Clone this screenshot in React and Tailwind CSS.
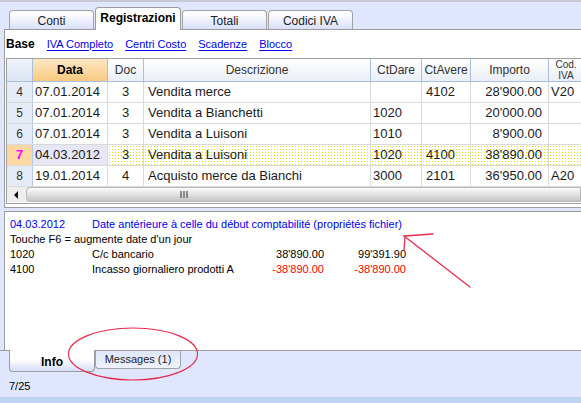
import React from "react"

const rows = [
  { n: "4", date: "07.01.2014", doc: "3", desc: "Vendita merce", dare: "", avere: "4102", imp: "28'900.00", iva: "V20" },
  { n: "5", date: "07.01.2014", doc: "3", desc: "Vendita a Bianchetti", dare: "1020", avere: "", imp: "20'000.00", iva: "" },
  { n: "6", date: "07.01.2014", doc: "3", desc: "Vendita a Luisoni", dare: "1010", avere: "", imp: "8'900.00", iva: "" },
  { n: "7", date: "04.03.2012", doc: "3", desc: "Vendita a Luisoni", dare: "1020", avere: "4100", imp: "38'890.00", iva: "", current: true },
  { n: "8", date: "19.01.2014", doc: "4", desc: "Acquisto merce da Bianchi", dare: "3000", avere: "2101", imp: "36'950.00", iva: "A20" },
]

const topTabs = [
  { label: "Conti" },
  { label: "Registrazioni", active: true },
  { label: "Totali" },
  { label: "Codici IVA" },
]

const links = ["IVA Completo", "Centri Costo", "Scadenze", "Blocco"]

const dots = "bg-[radial-gradient(circle,#e2e200_0.8px,transparent_1px)] bg-[length:3px_3px]"

const GridRow = ({ r }) => {
  const cell = r.current ? `bg-white ${dots}` : "bg-white"
  return (
    <div className="flex h-[21px] border-b border-[#d9d9d9] text-[13px] text-[#1a1a1a] leading-[20px]">
      <div
        className={`w-[26px] shrink-0 border-r border-[#b9cbe3] text-center text-[12px] ${
          r.current ? "bg-[#fbd89f] text-[#ff00ff] font-bold text-[13px]" : "bg-[#e5ecf7] text-[#333]"
        }`}
      >
        {r.n}
      </div>
      <div className={`w-[75px] shrink-0 border-r border-[#d9d9d9] pl-[2px] ${r.current ? "bg-[#e6e6f4]" : "bg-white"}`}>{r.date}</div>
      <div className={`w-[36px] shrink-0 border-r border-[#d9d9d9] text-center ${cell}`}>{r.doc}</div>
      <div className={`w-[227px] shrink-0 border-r border-[#d9d9d9] pl-[4px] ${cell}`}>{r.desc}</div>
      <div className={`w-[51px] shrink-0 border-r border-[#d9d9d9] pl-[2px] ${cell}`}>{r.dare}</div>
      <div className={`w-[49px] shrink-0 border-r border-[#d9d9d9] pl-[4px] ${cell}`}>{r.avere}</div>
      <div className={`w-[78px] shrink-0 border-r border-[#d9d9d9] pr-[6px] text-right ${cell}`}>{r.imp}</div>
      <div className={`w-[34px] shrink-0 pl-[2px] ${cell}`}>{r.iva}</div>
    </div>
  )
}

export default function App() {
  return (
    <div className="relative w-[581px] h-[403px] overflow-hidden bg-[#dfe6fd] font-['Liberation_Sans',Arial,sans-serif] text-black">
      <div className="h-[2px] bg-[#c6c9d2]" />

      {/* top tabs */}
      <div className="ml-[4px] h-[28px] flex items-end gap-[1px] pl-[5px] border-b border-[#9c9c9c]">
        {topTabs.map((t) =>
          t.active ? (
            <div
              key={t.label}
              className="relative -mb-px w-[86px] h-[23px] flex items-center justify-center rounded-t-[4px] border border-b-0 border-[#9c9c9c] bg-white text-[12px] font-bold pb-[2px]"
            >
              {t.label}
            </div>
          ) : (
            <div
              key={t.label}
              className="w-[85px] h-[19px] flex items-center justify-center rounded-t-[4px] border border-b-0 border-[#a3a3a3] bg-gradient-to-b from-white from-10% to-[#d9e0fa] text-[12px] text-[#222] pt-[1px]"
            >
              {t.label}
            </div>
          )
        )}
      </div>

      {/* upper panel */}
      <div className="ml-[4px] h-[178px] border-l border-b border-[#9c9c9c] bg-white flex flex-col">
        <div className="h-[28px] flex items-center gap-3 pl-[1px] text-[11px]">
          <span className="font-bold text-[12px]">Base</span>
          {links.map((l) => (
            <span key={l} className="text-[#0000ee] underline underline-offset-2">
              {l}
            </span>
          ))}
        </div>

        <div className="ml-[1px] h-[146px] border-l border-t border-b border-[#a0a0a0] overflow-hidden">
          {/* header */}
          <div className="flex h-[23px] border-b border-[#a9c0dc] text-[12px] text-[#333] leading-[22px]">
            <div className="w-[26px] shrink-0 border-r border-[#a9c0dc] bg-gradient-to-b from-[#eef2fa] to-[#dde6f4]" />
            <div className="w-[75px] shrink-0 border-r border-[#f0b35a] bg-gradient-to-b from-[#fde8c4] to-[#f8c97e] text-center font-bold text-black">
              Data
            </div>
            <div className="w-[36px] shrink-0 border-r border-[#a9c0dc] bg-gradient-to-b from-white to-[#e9eef6] text-center">Doc</div>
            <div className="w-[227px] shrink-0 border-r border-[#a9c0dc] bg-gradient-to-b from-white to-[#e9eef6] text-center">Descrizione</div>
            <div className="w-[51px] shrink-0 border-r border-[#a9c0dc] bg-gradient-to-b from-white to-[#e9eef6] text-center">CtDare</div>
            <div className="w-[49px] shrink-0 border-r border-[#a9c0dc] bg-gradient-to-b from-white to-[#e9eef6] text-center">CtAvere</div>
            <div className="w-[78px] shrink-0 border-r border-[#a9c0dc] bg-gradient-to-b from-white to-[#e9eef6] text-center">Importo</div>
            <div className="w-[34px] shrink-0 overflow-hidden bg-gradient-to-b from-white to-[#e9eef6] text-center text-[10px] leading-[11px] pt-[0px]">
              <div>Cod.</div>
              <div>IVA</div>
            </div>
          </div>

          {rows.map((r) => (
            <GridRow key={r.n} r={r} />
          ))}

          {/* horizontal scrollbar */}
          <div className="flex h-[15px] bg-[#eeeeee]">
            <div className="w-[19px] shrink-0 flex items-center justify-center">
              <svg width="5" height="8" viewBox="0 0 5 8">
                <path d="M4 0 L0 4 L4 8 Z" fill="#111" />
              </svg>
            </div>
            <div className="flex-1 flex items-center justify-center rounded-l-[4px] border border-[#b8b8b8] bg-gradient-to-b from-[#fbfbfb] via-[#e2e2e2] to-[#c4c4c4] pr-[240px]">
              <div className="flex gap-[1px]">
                <div className="w-[2px] h-[7px] bg-[#8a8a8a]" />
                <div className="w-[2px] h-[7px] bg-[#8a8a8a]" />
                <div className="w-[2px] h-[7px] bg-[#8a8a8a]" />
              </div>
            </div>
          </div>
        </div>
      </div>

      {/* splitter */}
      <div className="h-[3px]" />

      {/* info panel */}
      <div className="ml-[4px] h-[139px] border-l border-t border-[#9c9c9c] bg-white pt-[5px] pl-[5px] text-[11px] leading-[15px]">
        <div className="flex text-[#0000ee]">
          <span className="w-[82px]">04.03.2012</span>
          <span>Date antérieure à celle du début comptabilité (propriétés fichier)</span>
        </div>
        <div>Touche F6 = augmente date d'un jour</div>
        <div className="flex">
          <span className="w-[82px]">1020</span>
          <span className="w-[150px]">C/c bancario</span>
          <span className="w-[82px] text-right">38'890.00</span>
          <span className="w-[82px] text-right">99'391.90</span>
        </div>
        <div className="flex">
          <span className="w-[82px]">4100</span>
          <span className="w-[150px]">Incasso giornaliero prodotti A</span>
          <span className="w-[82px] text-right text-[#ff0000]">-38'890.00</span>
          <span className="w-[82px] text-right text-[#ff0000]">-38'890.00</span>
        </div>
      </div>

      {/* bottom tabs */}
      <div className="h-[22px] flex items-start pl-[4px] border-t border-[#9c9c9c]">
        <div className="w-[5px]" />
        <div className="-mt-px w-[86px] h-[22px] flex items-center justify-center rounded-b-[4px] border border-t-0 border-[#9c9c9c] bg-gradient-to-b from-white from-45% to-[#d6defa] text-[12px] font-bold pt-[2px]">
          Info
        </div>
        <div className="w-[86px] h-[18px] flex items-center justify-center rounded-b-[4px] border border-t-0 border-[#a3a3a3] bg-gradient-to-b from-[#dfe6fd] to-[#eef2fe] text-[11px] text-[#222]">
          Messages (1)
        </div>
      </div>

      {/* status */}
      <div className="h-[25px] pl-[9px] pt-[8px] text-[11px] leading-[13px]">7/25</div>
      <div className="h-[6px] bg-[#bcd3f2]" />

      {/* annotations */}
      <svg className="absolute inset-0 pointer-events-none" width="581" height="403" viewBox="0 0 581 403">
        <ellipse cx="133" cy="354" rx="64.5" ry="26" fill="none" stroke="#e8294b" strokeWidth="1.2" />
        <g stroke="#ec2c50" strokeWidth="1.3" fill="none" strokeLinecap="round">
          <line x1="470" y1="287" x2="404" y2="236" />
          <line x1="404" y1="236" x2="433" y2="234" />
          <line x1="405" y1="237" x2="404" y2="250" />
        </g>
      </svg>
    </div>
  )
}
